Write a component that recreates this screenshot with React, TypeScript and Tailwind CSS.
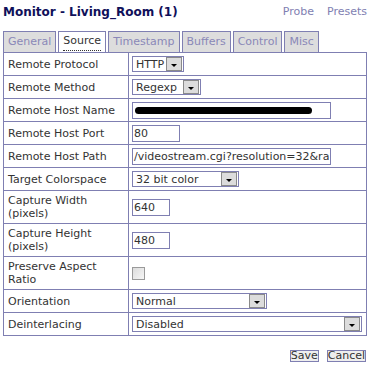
import React from 'react';

const TABS = ['General', 'Source', 'Timestamp', 'Buffers', 'Control', 'Misc'];

const Select = ({ value, width }: { value: string; width: string }) => (
  <div className={`flex h-[16px] items-center border border-[#7f7fb2] bg-white ${width}`}>
    <span className="flex-1 truncate pl-[3px] leading-none text-[#333]">{value}</span>
    <span className="flex h-[14px] w-[16px] items-center justify-center border border-[#8a8a8a] bg-[#dcdcdc] mr-px">
      <span className="mt-[3px] h-0 w-0 border-x-[3px] border-t-[3px] border-x-transparent border-t-black" />
    </span>
  </div>
);

const TextBox = ({ value, width }: { value: React.ReactNode; width: string }) => (
  <div className={`flex h-[17px] items-center overflow-hidden whitespace-nowrap border border-[#7f7fb2] bg-white pl-px leading-none text-[#333] ${width}`}>
    {value}
  </div>
);

const Row = ({ label, tall, children }: { label: React.ReactNode; tall?: boolean; children: React.ReactNode }) => (
  <div className={`grid grid-cols-[125px_1fr] border-t border-[#7f7fb2] ${tall ? 'h-[33px]' : 'h-[23px]'}`}>
    <div className="flex items-center border-r border-[#7f7fb2] pl-[4px] leading-[13px] text-[#333]">{label}</div>
    <div className="flex items-center pl-[3px]">{children}</div>
  </div>
);

export default function App() {
  return (
    <div className="h-[379px] w-[373px] bg-white text-[11px] text-[#333]" style={{ fontFamily: '"DejaVu Sans", Verdana, sans-serif' }}>
      <div className="flex items-start justify-between pl-[3px] pr-[6px] pt-[4px]">
        <h2 className="text-[12px] font-bold leading-[16px] text-[#10105a]">Monitor - Living_Room (1)</h2>
        <div className="flex gap-[13px] leading-[16px] text-[#7f7fb2]">
          <span>Probe</span>
          <span>Presets</span>
        </div>
      </div>

      <div className="mt-[11px] flex gap-[2px] pl-[3px]">
        {TABS.map(tab => (
          <div
            key={tab}
            className={`flex h-[21px] items-center border border-b-0 border-[#7f7fb2] px-[4px] ${tab === 'Source' ? 'bg-white text-[#333]' : 'bg-[#dddddd] text-[#8a88b8]'}`}
          >
            <span className={tab === 'Source' ? 'border-b border-dotted border-[#333]' : ''}>{tab}</span>
          </div>
        ))}
      </div>

      <div className="mx-[3px] w-[364px] border-x border-b border-[#7f7fb2]">
        <Row label="Remote Protocol"><Select value="HTTP" width="w-[52px]" /></Row>
        <Row label="Remote Method"><Select value="Regexp" width="w-[69px]" /></Row>
        <Row label="Remote Host Name">
          <TextBox width="w-[199px]" value={<span className="ml-px h-[7px] w-[177px] rounded-full bg-black" />} />
        </Row>
        <Row label="Remote Host Port"><TextBox value="80" width="w-[48px]" /></Row>
        <Row label="Remote Host Path"><TextBox value="/videostream.cgi?resolution=32&ra" width="w-[199px]" /></Row>
        <Row label="Target Colorspace"><Select value="32 bit color" width="w-[107px]" /></Row>
        <Row tall label={<span>Capture Width<br />(pixels)</span>}><TextBox value="640" width="w-[38px]" /></Row>
        <Row tall label={<span>Capture Height<br />(pixels)</span>}><TextBox value="480" width="w-[38px]" /></Row>
        <Row tall label={<span>Preserve Aspect<br />Ratio</span>}>
          <span className="h-[13px] w-[13px] border border-[#9a9a9a] bg-gradient-to-br from-[#dcdcdc] to-[#f6f6f6]" />
        </Row>
        <Row label="Orientation"><Select value="Normal" width="w-[135px]" /></Row>
        <Row label="Deinterlacing"><Select value="Disabled" width="w-[230px]" /></Row>
      </div>

      <div className="mt-[14px] flex justify-end gap-[8px] pr-[7px]">
        <button className="h-[12px] border border-[#7f7fb2] bg-[#eeeeee] px-0 text-[11px] leading-[10px] text-[#333]">Save</button>
        <button className="h-[12px] border border-[#7f7fb2] bg-[#eeeeee] px-0 text-[11px] leading-[10px] text-[#333]">Cancel</button>
      </div>
    </div>
  );
}
